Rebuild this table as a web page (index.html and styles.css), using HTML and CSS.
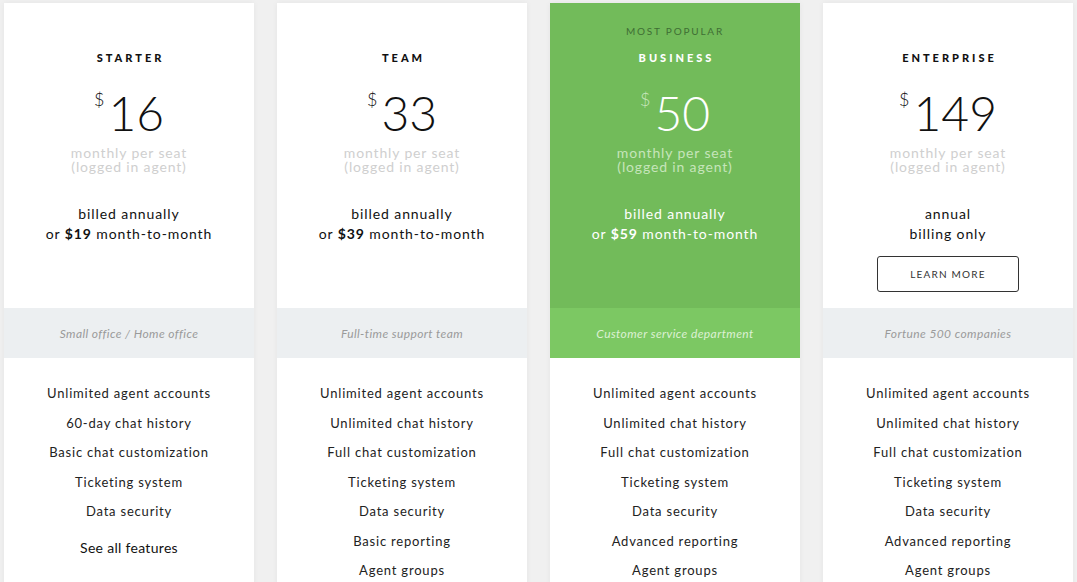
FILE: index.html
```html
<!DOCTYPE html>
<html lang="en">
<head>
<meta charset="utf-8">
<title>Pricing</title>
<link rel="stylesheet" href="styles.css">
</head>
<body>
<main class="plans">
  <section class="card">
    <div class="top">
      <div class="tag"></div>
      <h2 class="name">STARTER</h2>
      <div class="price"><span class="cur">$</span><span class="amt">16</span></div>
      <p class="unit">monthly per seat<br>(logged in agent)</p>
      <p class="billing">billed annually<br>or <b>$19</b> month-to-month</p>
    </div>
    <div class="band">Small office / Home office</div>
    <ul class="features">
      <li>Unlimited agent accounts</li>
      <li>60-day chat history</li>
      <li>Basic chat customization</li>
      <li>Ticketing system</li>
      <li>Data security</li>
      <li class="all">See all features</li>
    </ul>
  </section>
  <section class="card">
    <div class="top">
      <div class="tag"></div>
      <h2 class="name">TEAM</h2>
      <div class="price"><span class="cur">$</span><span class="amt">33</span></div>
      <p class="unit">monthly per seat<br>(logged in agent)</p>
      <p class="billing">billed annually<br>or <b>$39</b> month-to-month</p>
    </div>
    <div class="band">Full-time support team</div>
    <ul class="features">
      <li>Unlimited agent accounts</li>
      <li>Unlimited chat history</li>
      <li>Full chat customization</li>
      <li>Ticketing system</li>
      <li>Data security</li>
      <li>Basic reporting</li>
      <li>Agent groups</li>
    </ul>
  </section>
  <section class="card popular">
    <div class="top">
      <div class="tag">MOST POPULAR</div>
      <h2 class="name">BUSINESS</h2>
      <div class="price"><span class="cur">$</span><span class="amt">50</span></div>
      <p class="unit">monthly per seat<br>(logged in agent)</p>
      <p class="billing">billed annually<br>or <b>$59</b> month-to-month</p>
    </div>
    <div class="band">Customer service department</div>
    <ul class="features">
      <li>Unlimited agent accounts</li>
      <li>Unlimited chat history</li>
      <li>Full chat customization</li>
      <li>Ticketing system</li>
      <li>Data security</li>
      <li>Advanced reporting</li>
      <li>Agent groups</li>
    </ul>
  </section>
  <section class="card">
    <div class="top">
      <div class="tag"></div>
      <h2 class="name">ENTERPRISE</h2>
      <div class="price"><span class="cur">$</span><span class="amt">149</span></div>
      <p class="unit">monthly per seat<br>(logged in agent)</p>
      <p class="billing">annual<br>billing only</p>
      <a class="btn" href="#">LEARN MORE</a>
    </div>
    <div class="band">Fortune 500 companies</div>
    <ul class="features">
      <li>Unlimited agent accounts</li>
      <li>Unlimited chat history</li>
      <li>Full chat customization</li>
      <li>Ticketing system</li>
      <li>Data security</li>
      <li>Advanced reporting</li>
      <li>Agent groups</li>
    </ul>
  </section>
</main>
</body>
</html>
```
FILE: styles.css
```css
html, body {
  margin: 0;
  padding: 0;
  overflow: hidden;
}
body {
  background: #f0f0f0;
  font-family: Lato, "Liberation Sans", sans-serif;
  color: #111;
}
.plans {
  display: flex;
  gap: 23px;
  padding: 3px 4px 0;
}
.card {
  width: 250px;
  flex: 0 0 250px;
  background: #fff;
  box-shadow: 0 0 6px rgba(0, 0, 0, 0.05);
  text-align: center;
}
.top {
  height: 305px;
  box-sizing: border-box;
  padding-top: 21px;
  display: flex;
  flex-direction: column;
  align-items: center;
}
.tag {
  height: 14px;
  font-size: 10px;
  line-height: 14px;
  letter-spacing: 1.8px;
  color: #3f6e34;
}
.name {
  margin: 13px 0 0;
  font-size: 11px;
  line-height: 14px;
  font-weight: 900;
  letter-spacing: 3px;
  padding-left: 3px;
  color: #111;
}
.price {
  margin-top: 24px;
  display: flex;
  align-items: flex-start;
  height: 48px;
}
.cur {
  font-size: 18px;
  font-weight: 300;
  line-height: 18px;
  margin-right: 4px;
  margin-top: 1px;
}
.amt {
  font-size: 48px;
  font-weight: 300;
  line-height: 48px;
}
.unit {
  margin: 9px 0 0;
  font-size: 14px;
  line-height: 14px;
  letter-spacing: 0.85px;
  color: #cfcfcf;
}
.billing {
  margin: 30px 0 0;
  font-size: 14px;
  line-height: 20px;
  letter-spacing: 0.9px;
  color: #111;
}
.billing b {
  font-weight: 700;
}
.btn {
  margin-top: 12px;
  width: 142px;
  height: 36px;
  box-sizing: border-box;
  border: 1px solid #333;
  border-radius: 3px;
  font-size: 10px;
  line-height: 34px;
  letter-spacing: 1.2px;
  color: #333;
  text-decoration: none;
}
.band {
  height: 50px;
  background: #eceff1;
  font-size: 12px;
  line-height: 52px;
  font-style: italic;
  letter-spacing: 0.4px;
  color: #9a9a9a;
}
.features {
  list-style: none;
  margin: 0;
  padding: 21px 0 0;
}
.features li {
  font-size: 13px;
  line-height: 29.5px;
  letter-spacing: 0.8px;
  color: #222;
}
.features li.all {
  margin-top: 6px;
  font-size: 14px;
  letter-spacing: 0.3px;
  color: #111;
}
.popular .top {
  background: #72bb5a;
}
.popular .name,
.popular .amt,
.popular .billing {
  color: #fff;
}
.popular .cur {
  color: #c9e6bf;
}
.popular .unit {
  color: #c6e5ba;
}
.popular .band {
  background: #7cc863;
  color: #dcf1d4;
}
```
